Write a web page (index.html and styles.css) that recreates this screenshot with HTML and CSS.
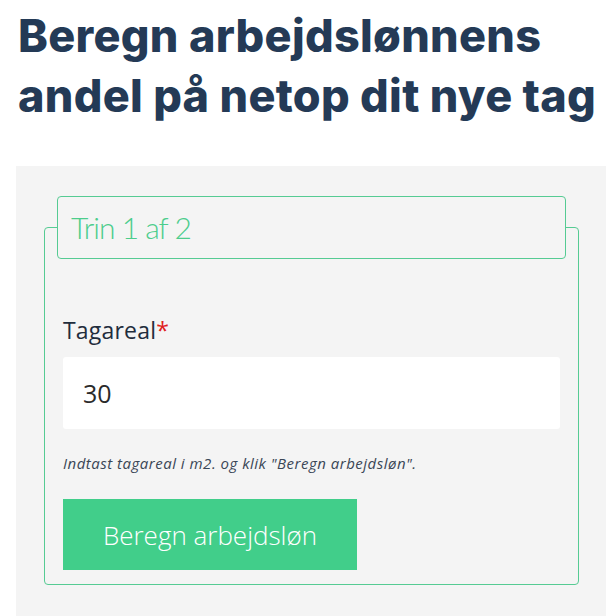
FILE: index.html
```html
<!DOCTYPE html>
<html lang="da">
  <head>
    <meta http-equiv="Content-Type" content="text/html;charset=UTF-8" />
    <meta name="viewport" content="width=device-width, initial-scale=1.0" />
    <title>Beregn arbejdsløn</title>
    <link rel="stylesheet" href="styles.css">
  </head>
  <body>
    <h1 class="title">Beregn arbejdslønnens andel på netop dit nye tag</h1>

    <section class="calc">
      <form class="calcForm">
        <fieldset class="step">
          <legend class="stepLegend">Trin 1 af 2</legend>
          <label class="fieldLabel" for="roofArea">Tagareal<span class="req">*</span></label>
          <input id="roofArea" class="fieldInput" type="text" value="30" />
          <p class="fieldHelp">Indtast tagareal i m2. og klik "Beregn arbejdsløn".</p>
          <button class="calcButton" type="button">Beregn arbejdsløn</button>
        </fieldset>
      </form>
    </section>
  </body>
</html>
```

FILE: styles.css
```css
/* Side */
body {
  margin: 0;
  padding: 0 10px 0 16px;
  background-color: #fff;
  font-family: "Open Sans", Arial, sans-serif;
  color: #1f2d3d;
}

/* Overskrift */
.title {
  margin: 6px 0 40px 2px;
  font-family: Inter, "DejaVu Sans", sans-serif;
  font-size: 45px;
  line-height: 60px;
  font-weight: 800;
  color: #243a56;
  letter-spacing: 0.3px;
}

/* Beregner */
.calc {
  background-color: #f4f4f4;
  padding: 30px 27px 40px 28px;
}

.calcForm {
  margin: 0;
}

.step {
  margin: 0;
  padding: 0 18px 14px 18px;
  border: 1px solid #56cb93;
  border-radius: 4px;
}

.stepLegend {
  box-sizing: border-box;
  width: calc(100% + 12px);
  height: 63px;
  margin-left: -6px;
  padding: 0 13px;
  border: 1px solid #56cb93;
  border-radius: 4px;
  font-family: Lato, sans-serif;
  font-weight: 300;
  font-size: 30px;
  line-height: 61px;
  letter-spacing: -1px;
  color: #4ccd8c;
}

.fieldLabel {
  display: block;
  margin-top: 57px;
  font-size: 23px;
  line-height: 28px;
  letter-spacing: 0.2px;
  color: #1f2d3d;
}

.req {
  color: #e0201c;
}

.fieldInput {
  display: block;
  box-sizing: border-box;
  width: 100%;
  height: 72px;
  margin-top: 13px;
  padding: 0 20px;
  border: none;
  border-radius: 3px;
  background-color: #fff;
  font-family: "Open Sans", sans-serif;
  font-size: 25px;
  color: #2a2a2a;
  outline: none;
}

.fieldHelp {
  margin: 24px 0 0 0;
  font-size: 15px;
  line-height: 20px;
  font-style: italic;
  letter-spacing: 0.5px;
  color: #3a4656;
}

.calcButton {
  display: block;
  width: 294px;
  height: 71px;
  margin-top: 26px;
  border: none;
  border-radius: 0;
  background-color: #41ce8a;
  color: #fff;
  font-family: "Open Sans", sans-serif;
  font-weight: 300;
  font-size: 26px;
  cursor: pointer;
}
```
